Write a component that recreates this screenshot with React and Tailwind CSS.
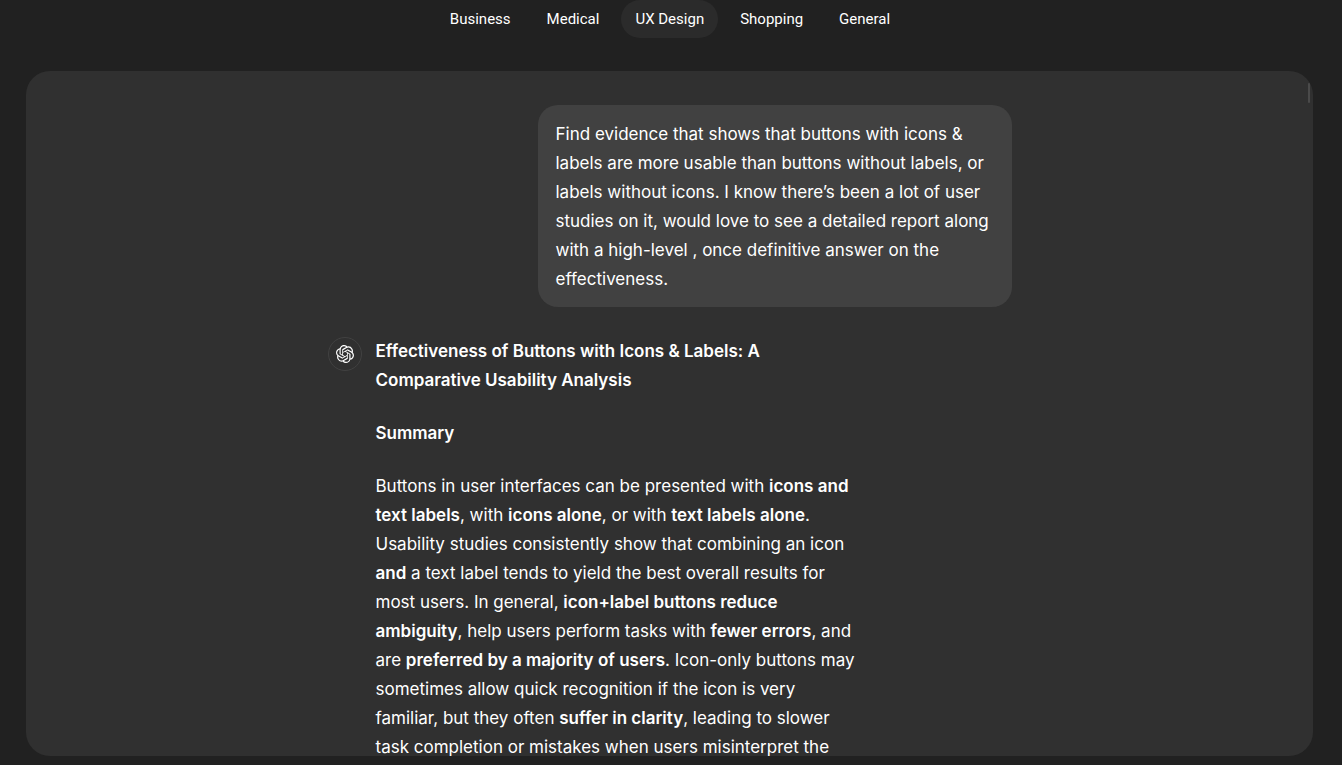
import React from 'react';
import { SiOpenai } from 'react-icons/si';
import clsx from 'clsx';

const TABS = ['Business', 'Medical', 'UX Design', 'Shopping', 'General'];

function CategoryTabs({ active, onChange }) {
  return (
    <nav className="flex justify-center gap-2 pr-0.5" aria-label="Example categories">
      {TABS.map((tab) => (
        <button
          key={tab}
          type="button"
          onClick={() => onChange(tab)}
          className={clsx(
            "h-[38px] rounded-full px-[14px] font-['Roboto',sans-serif] text-[15px] text-white",
            tab === active && 'bg-[#2b2b2b]'
          )}
        >
          {tab}
        </button>
      ))}
    </nav>
  );
}

function UserMessage({ children }) {
  return (
    <div className="ml-auto w-[474px] max-w-full rounded-[20px] bg-[#414141] px-[18px] pt-[15px] pb-[13px]">
      <p>{children}</p>
    </div>
  );
}

function AssistantMessage({ children }) {
  return (
    <div className="mt-[30px] flex items-start gap-[14px]">
      <div className="flex size-[34px] shrink-0 items-center justify-center rounded-full border border-[#414141]">
        <SiOpenai className="size-[18px]" aria-label="ChatGPT" />
      </div>
      <div className="flex w-[484px] flex-col gap-6">{children}</div>
    </div>
  );
}

export default function App() {
  const [tab, setTab] = React.useState('UX Design');

  return (
    <div className="flex h-screen flex-col bg-[#212121] font-['Inter',sans-serif] text-white">
      <CategoryTabs active={tab} onChange={setTab} />

      {/* Conversation panel */}
      <main className="relative mt-[33px] mr-[29px] mb-[9px] ml-[26px] min-h-0 flex-1 overflow-hidden rounded-[24px] bg-[#303030]">
        <div className="mx-auto max-w-[684px] pt-[34px] text-[17px] leading-[29px]">
          <UserMessage>
            Find evidence that shows that buttons with icons &amp; labels are more usable than
            buttons without labels, or labels without icons. I know there’s been a lot of user
            studies on it, would love to see a detailed report along with a high-level , once
            definitive answer on the effectiveness.
          </UserMessage>

          <AssistantMessage>
            <h1 className="max-w-[420px] font-semibold">
              Effectiveness of Buttons with Icons &amp; Labels: A Comparative Usability Analysis
            </h1>
            <h2 className="font-semibold">Summary</h2>
            <p>
              Buttons in user interfaces can be presented with <b className="font-semibold">icons and text labels</b>,
              with <b className="font-semibold">icons alone</b>, or with <b className="font-semibold">text labels alone</b>.
              Usability studies consistently show that combining an icon <b className="font-semibold">and</b> a
              text label tends to yield the best overall results for most users. In
              general, <b className="font-semibold">icon+label buttons reduce ambiguity</b>, help users perform tasks
              with <b className="font-semibold">fewer errors</b>, and
              are <b className="font-semibold">preferred by a majority of users</b>. Icon-only buttons may sometimes
              allow quick recognition if the icon is very familiar, but they
              often <b className="font-semibold">suffer in clarity</b>, leading to slower task completion or mistakes
              when users misinterpret the
            </p>
          </AssistantMessage>
        </div>

        {/* Scroll thumb */}
        <div className="absolute top-3 right-[3px] h-5 w-0.5 rounded-full bg-[#4a4a4a]" />
      </main>
    </div>
  );
}
